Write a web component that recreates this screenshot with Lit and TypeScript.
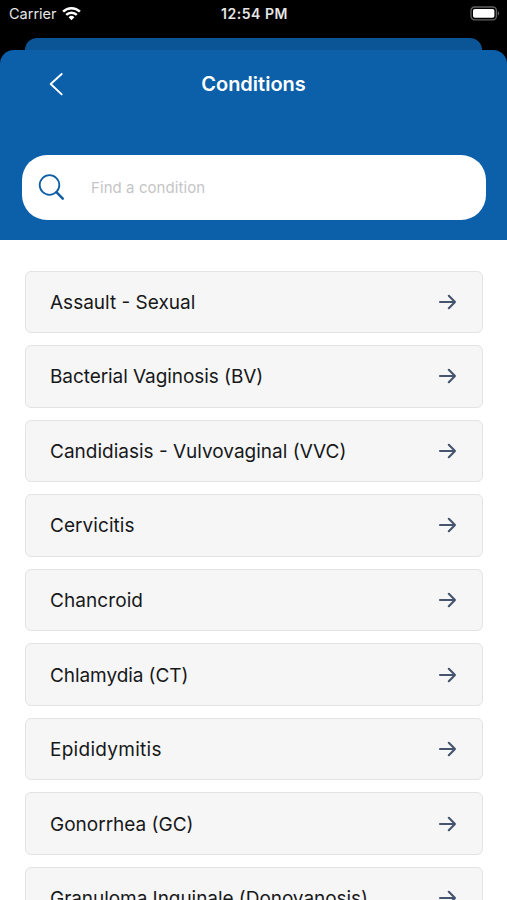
import { LitElement, html, css } from "lit";
import { customElement, property } from "lit/decorators.js";

interface Condition {
  name: string;
  tracking: number;
}

const CONDITIONS: Condition[] = [
  { name: "Assault - Sexual", tracking: 0 },
  { name: "Bacterial Vaginosis (BV)", tracking: -0.07 },
  { name: "Candidiasis - Vulvovaginal (VVC)", tracking: 0 },
  { name: "Cervicitis", tracking: 0.06 },
  { name: "Chancroid", tracking: 0.08 },
  { name: "Chlamydia (CT)", tracking: -0.07 },
  { name: "Epididymitis", tracking: 0.28 },
  { name: "Gonorrhea (GC)", tracking: 0 },
  { name: "Granuloma Inguinale (Donovanosis)", tracking: -0.05 },
];

@customElement("status-bar")
export class StatusBar extends LitElement {
  static styles = css`
    :host {
      display: grid;
      grid-template-columns: 1fr auto 1fr;
      align-items: center;
      height: 28px;
      padding: 0 7px 0 9px;
      box-sizing: border-box;
      color: #e6e6e6;
      font: 400 14.5px/28px Inter, sans-serif;
    }
    .left {
      display: flex;
      align-items: center;
      gap: 5px;
    }
    .left svg {
      margin-top: -2px;
    }
    .time {
      font-weight: 600;
      font-size: 14px;
      letter-spacing: 0.55px;
    }
    .battery {
      justify-self: end;
      margin-top: -1px;
    }
    svg {
      display: block;
    }
  `;

  render() {
    return html`
      <div class="left">
        <span>Carrier</span>
        <svg width="19" height="15" viewBox="0 0 19 15" fill="none" stroke="#fff" stroke-width="2.5">
          <path d="M1.1 5.6a12 12 0 0 1 16.8 0" />
          <path d="M4.2 8.8a7.6 7.6 0 0 1 10.6 0" />
          <path d="M9.5 14.2 6.6 11.3a4.1 4.1 0 0 1 5.8 0z" fill="#fff" stroke="none" />
        </svg>
      </div>
      <span class="time">12:54 PM</span>
      <svg class="battery" width="30" height="15" viewBox="0 0 30 15">
        <rect x="1" y="1" width="25.4" height="12.8" rx="3.6" fill="none" stroke="#626262" stroke-width="1.3" />
        <rect x="3" y="3" width="21.4" height="8.8" rx="1.8" fill="#fff" />
        <path d="M27.8 5.2c1.9.8 1.9 3.6 0 4.4z" fill="#626262" />
      </svg>
    `;
  }
}

@customElement("condition-row")
export class ConditionRow extends LitElement {
  @property() name = "";
  @property({ type: Number }) tracking = 0;

  static styles = css`
    :host {
      display: flex;
      align-items: center;
      justify-content: space-between;
      flex: none;
      height: 62.57px;
      padding: 0 24.5px 0 24px;
      box-sizing: border-box;
      border: 1.4px solid #e3e3e4;
      border-radius: 6px;
      background: #f6f6f6;
      color: #17181a;
      font: 400 19px/26px Inter, sans-serif;
      white-space: nowrap;
    }
    span {
      padding-top: 2px;
    }
    svg {
      display: block;
    }
  `;

  render() {
    return html`
      <span style="letter-spacing:${this.tracking}px">${this.name}</span>
      <svg width="19" height="16" viewBox="0 0 19 16" fill="none" stroke="#46546f" stroke-width="2.1" stroke-linecap="round" stroke-linejoin="round">
        <path d="M2 8h15M10.8 1.8 17 8l-6.2 6.2" />
      </svg>
    `;
  }
}

@customElement("app-root")
export class AppRoot extends LitElement {
  static styles = css`
    :host {
      display: flex;
      flex-direction: column;
      height: 900px;
      overflow: hidden;
      background: #000;
      font-family: Inter, sans-serif;
    }
    .behind {
      flex: none;
      height: 12px;
      margin: 10px 25px 0;
      border-radius: 12px 12px 0 0;
      background: #0b5596;
    }
    .sheet {
      flex: 1;
      min-height: 0;
      display: flex;
      flex-direction: column;
    }
    .header {
      flex: none;
      height: 190px;
      box-sizing: border-box;
      padding: 0 21px 20.5px 22px;
      display: flex;
      flex-direction: column;
      justify-content: space-between;
      border-radius: 14px 14px 0 0;
      background: #0c60aa;
    }
    .nav {
      display: grid;
      grid-template-columns: 1fr auto 1fr;
      align-items: center;
      height: 68px;
      padding-left: 26px;
      padding-right: 27px;
    }
    .title {
      color: #fff;
      font-weight: 600;
      font-size: 20px;
      line-height: 28px;
    }
    .search {
      display: flex;
      align-items: center;
      height: 65px;
      padding-left: 16px;
      box-sizing: border-box;
      border-radius: 25px;
      background: #fff;
    }
    .placeholder {
      margin-left: 26px;
      padding-top: 1px;
      color: #c5c5c7;
      font-size: 15px;
      line-height: 22px;
      letter-spacing: 0.07px;
    }
    .list {
      flex: 1;
      min-height: 0;
      display: flex;
      flex-direction: column;
      gap: 12px;
      padding: 30.5px 24.5px 0 25px;
      overflow: hidden;
      background: #fff;
    }
    svg {
      display: block;
    }
  `;

  render() {
    return html`
      <status-bar></status-bar>
      <div class="behind"></div>
      <div class="sheet">
        <div class="header">
          <div class="nav">
            <svg width="16" height="24" viewBox="0 0 16 24" fill="none" stroke="#fff" stroke-width="1.9" stroke-linecap="round" stroke-linejoin="round">
              <path d="M13.7 2 2.7 12l11 10.4" />
            </svg>
            <span class="title">Conditions</span>
          </div>
          <div class="search">
            <svg width="27" height="27" viewBox="0 0 27 27" fill="none" stroke="#0f5fa6" stroke-linecap="round">
              <circle cx="11.5" cy="11" r="9.8" stroke-width="1.8" />
              <path d="m18.4 18.2 6.4 6.4" stroke-width="2.5" />
            </svg>
            <span class="placeholder">Find a condition</span>
          </div>
        </div>
        <div class="list">
          ${CONDITIONS.map(
            (c) => html`<condition-row .name=${c.name} .tracking=${c.tracking}></condition-row>`
          )}
        </div>
      </div>
    `;
  }
}
